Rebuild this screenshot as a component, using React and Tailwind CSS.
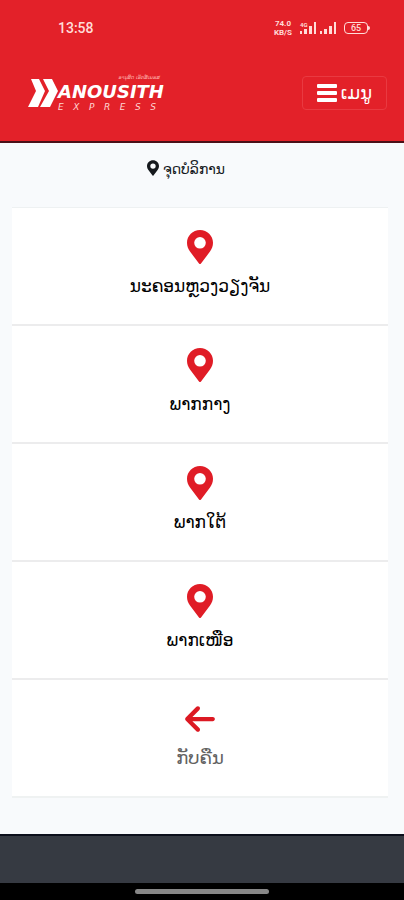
import { FaArrowLeft } from "react-icons/fa6";

const regions = ["ນະຄອນຫຼວງວຽງຈັນ", "ພາກກາງ", "ພາກໃຕ້", "ພາກເໜືອ"];

function PinIcon({ className }) {
  return (
    <svg className={className} viewBox="0 0 26 34" fill="currentColor" fillRule="evenodd" aria-hidden="true">
      <path d="M13 0C5.8 0 0 5.7 0 12.8C0 16.2 1.2 18.9 3 21.6L12 33.4Q13 34.6 14 33.4L23 21.6C24.8 18.9 26 16.2 26 12.8C26 5.7 20.2 0 13 0ZM13 7A5.8 5.8 0 1 1 13 18.6A5.8 5.8 0 1 1 13 7Z" />
    </svg>
  );
}

function MenuIcon() {
  return (
    <svg className="h-[18px] w-5" viewBox="0 0 20 18" fill="currentColor" aria-hidden="true">
      <rect width="20" height="4" rx="1" />
      <rect y="7" width="20" height="4" rx="1" />
      <rect y="14" width="20" height="4" rx="1" />
    </svg>
  );
}

function SignalBars() {
  return (
    <svg className="h-3 w-4" viewBox="0 0 16 12" fill="currentColor" aria-hidden="true">
      <rect x="0" y="9" width="2" height="3" />
      <rect x="4" y="7" width="3" height="5" />
      <rect x="9" y="4" width="3" height="8" />
      <rect x="14" y="0" width="2" height="12" />
    </svg>
  );
}

function StatusBar() {
  return (
    <div className="flex h-14 items-center justify-between pr-[34px] pl-[58px] font-[Roboto,sans-serif] text-[#ffdcd8]">
      <time className="text-sm font-medium">13:58</time>
      <div className="flex items-center gap-1">
        <div className="mr-1 text-center text-[8px] leading-[9px] font-bold">
          <div>74.0</div>
          <div>KB/S</div>
        </div>
        <div className="relative">
          <span className="absolute -top-px left-0 text-[6px] leading-[7px] font-bold">4G</span>
          <SignalBars />
        </div>
        <SignalBars />
        <div className="ml-1 flex items-center">
          <div className="flex h-3 w-6 items-center justify-center rounded-sm border border-current text-[9px] leading-none font-medium">
            65
          </div>
          <div className="h-1 w-0.5 rounded-r bg-current" />
        </div>
      </div>
    </div>
  );
}

function Logo() {
  return (
    <a href="#home" className="flex items-center text-white">
      <svg className="h-7 w-[30px]" viewBox="0 0 30 28" fill="currentColor" aria-hidden="true">
        <path d="M3 0H11L17 12L10 28H0L8 12Z" />
        <path d="M15 0H24L30 12L22 28H12L21 12Z" />
      </svg>
      <span className="flex flex-col">
        <span className="pr-1 text-right text-[5px] leading-[7px] text-[#ffb3ae] italic">ອານຸສິດ ເອັກສ໌ເພຣສ</span>
        <span className="text-lg leading-[21px] font-bold italic">ANOUSITH</span>
        <span className="flex justify-between pr-2 text-[9px] leading-[10px] text-[#ffd5d2] italic">
          {"EXPRESS".split("").map((letter, index) => (
            <span key={index}>{letter}</span>
          ))}
        </span>
      </span>
    </a>
  );
}

function Header() {
  return (
    <header className="border-b-2 border-[#4a1018] bg-[#e32129]">
      <StatusBar />
      <div className="flex items-center justify-between pt-[18px] pr-[17px] pb-[29px] pl-7">
        <Logo />
        <button
          type="button"
          className="flex h-[34px] items-center gap-1 rounded border border-[#e93a41] px-3.5 text-white"
        >
          <MenuIcon />
          <span className="text-lg leading-6">ເມນູ</span>
        </button>
      </div>
    </header>
  );
}

export default function App() {
  return (
    <div className="flex min-h-screen flex-col bg-[#f8fafc] font-['DejaVu_Sans','Noto_Sans_Lao',sans-serif]">
      <Header />
      <main className="flex-1 pr-4 pb-9 pl-3">
        <h1 className="flex h-16 items-start justify-center gap-1 pt-4 pr-7 text-sm leading-5 text-[#15191d]">
          <PinIcon className="mt-px h-4 w-3" />
          ຈຸດບໍລິການ
        </h1>
        <nav className="border-t border-[#eef1f2]">
          {regions.map((name) => (
            <a
              key={name}
              href="#region"
              className="flex h-[118px] flex-col items-center border-b-2 border-[#ececed] bg-white pt-[22px] text-black"
            >
              <PinIcon className="h-[34px] w-[26px] text-[#e01c26]" />
              <span className="mt-2 text-[17px] leading-7">{name}</span>
            </a>
          ))}
          <a
            href="#back"
            className="flex h-[118px] flex-col items-center border-b-2 border-[#eff2f2] bg-white pt-[22px] text-[#626262]"
          >
            <FaArrowLeft className="h-[34px] w-[30px] text-[#dc1923]" aria-hidden="true" />
            <span className="mt-2 text-lg leading-7">ກັບຄືນ</span>
          </a>
        </nav>
      </main>
      <footer>
        <div className="h-[49px] border-t-2 border-[#0c0f1b] bg-[#363a42]" />
        <div className="flex h-[18px] justify-center bg-black pt-1.5">
          <div className="h-[5px] w-1/3 rounded-full bg-[#878787]" />
        </div>
      </footer>
    </div>
  );
}
